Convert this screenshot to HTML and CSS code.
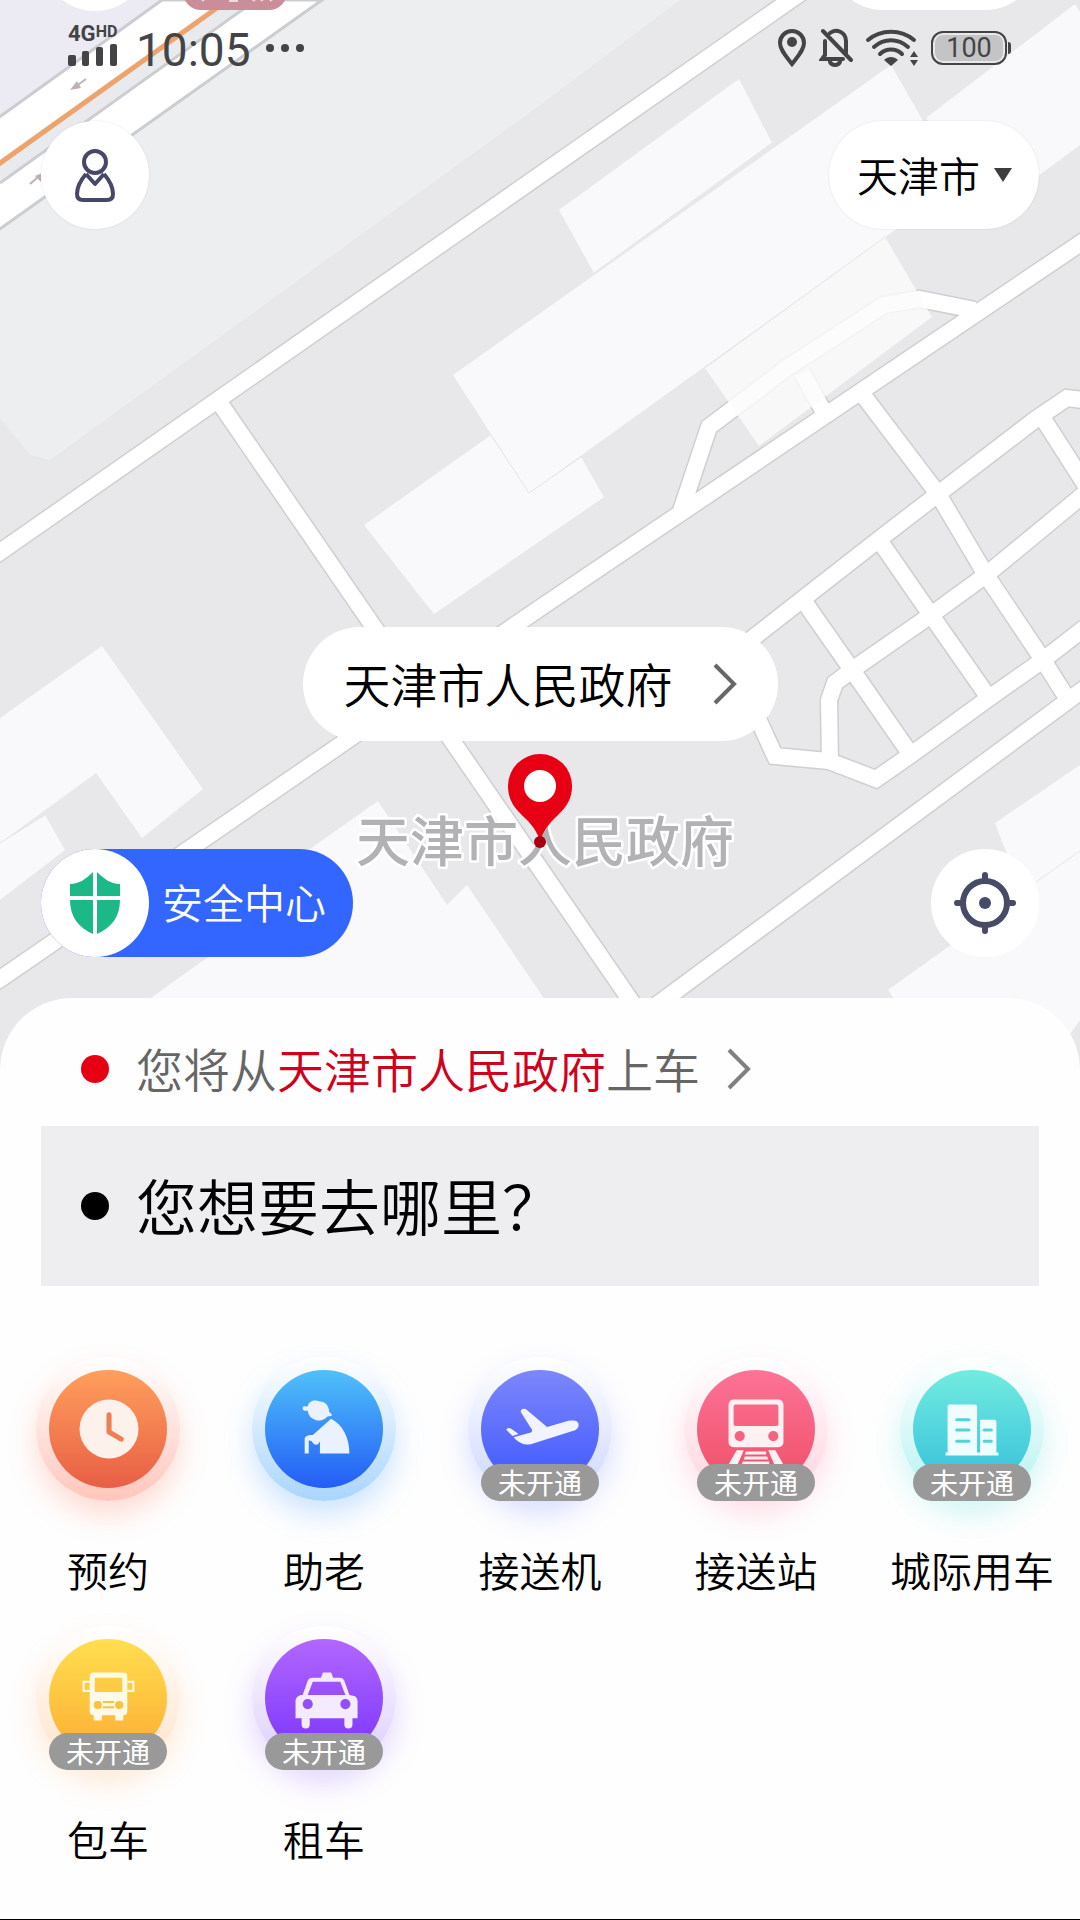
FILE: index.html
```html
<!DOCTYPE html>
<html lang="zh-CN">
<head>
<meta charset="utf-8">
<meta name="viewport" content="width=device-width, initial-scale=1">
<title>打车</title>
<link rel="stylesheet" href="styles.css">
</head>
<body>
<div class="app">
  <svg class="map" viewBox="0 0 1080 1100" preserveAspectRatio="xMidYMin slice" aria-hidden="true">
    <defs>
      <g id="roads" fill="none" stroke-linejoin="miter">
        <path d="M-20 566 812-15"/>
        <path d="M219 402 640 1014"/>
        <path d="M-20 992 0 979 349 739 540 608 1100 230"/>
        <path d="M680 514 709 427 788 367 884 305 919 299 975 310"/>
        <path d="M802 373 824 412"/>
        <path d="M735 652 877 541 938 494 1036 419 1067 398 1100 402"/>
        <path d="M830 761 829 700 835 683 852 670 931 615 986 575 1100 481"/>
        <path d="M752 706 775 756 829 761 876 779 912 754 989 698 1043 660 1100 616"/>
        <path d="M650 1010 1100 677"/>
        <path d="M860 391 938 494 986 575 1043 660 1067 698"/>
        <path d="M877 537 931 615 989 698"/>
        <path d="M803 600 852 670 909 752"/>
        <path d="M1042 417 1090 492"/>
      </g>
    </defs>
    <rect width="1080" height="1100" fill="#e8e8eb"/>
    <path d="M0 117 162 0H680L540 105 50 460 30 455 0 418Z" fill="#edeef0"/>
    <path d="M0 0H162L0 117Z" fill="#eceaf2"/>
    <path d="M-20 131 162 0H322L-20 243Z" fill="#fff" stroke="#cbcdd0" stroke-width="3"/>
    <path d="M0 166 230 0H256L0 183Z" fill="#e8eaed"/>
    <path d="M0 183 256 0" stroke="#cbcdd0" stroke-width="3"/>
    <path d="M-4 166 228 0" stroke="#eda36c" stroke-width="5"/>
    <g stroke="#bfb2b3" stroke-width="2" fill="#bfb2b3"><path d="M86 79 75 87"/><path d="M70 90 77 81 81 88Z" stroke="none"/><path d="M30 184 38 177"/><path d="M42 173 35 176 41 182Z" stroke="none"/></g>
    <use href="#roads" stroke="#cfcfd2" stroke-width="19"/>
    <use href="#roads" stroke="#fff" stroke-width="16"/>
    <g fill="#f9f9fc">
      <path d="M559 210 739 79 772 143 594 273Z"/>
      <path d="M453 375 891 65 960 185 885 237 529 493Z"/>
      <path d="M926 118 1075 4 1080 12V145L1030 182 960 185Z"/>
      <path d="M364 525 491 435 529 493 581 457 604 497 434 614Z"/>
      <path d="M0 718 102 646 203 789 142 838 96 773 0 843Z"/>
      <path d="M0 843 45 815 65 850 0 900Z"/>
      <path d="M378 801 447 905 467 885 545 1000H148L310 884 290 863Z"/>
      <path d="M1080 765 995 823 1022 894 888 990 905 1015 1066 1080V1040L1080 1020Z"/>
      <path d="M705 368 885 237 932 317 759 446Z" fill="#fbfbfd" fill-opacity=".8"/>
    </g>
    <path d="M594 273 772 143M705 368 885 237M529 493 581 457M491 435 529 493M0 843 45 815M926 118 960 185M1036 882 1080 851" fill="none" stroke="#e6e6ea"/>
    <circle cx="95" cy="-43" r="54" fill="#fff"/>
    <rect x="829" y="-98" width="210" height="108" rx="54" fill="#fff"/>
    <rect x="183" y="-40" width="104" height="50" rx="18" fill="#c98e99"/>
    <path d="M202 1 206-2M229 1h8V-3M250-2 255 1M261 1 266-3M270 1 274-2" fill="none" stroke="#efd9dd" stroke-width="2"/>
    <text class="map-label" x="356" y="862">天津市人民政府</text>
  </svg>

  <section class="stage">
    <div class="status">
      <div class="carrier">
        <span class="network">4G<span class="network-hd">HD</span></span>
        <svg width="50" height="22" viewBox="0 0 50 22" fill="#444446"><rect y="11" width="8" height="11" rx="2"/><rect x="14" y="7" width="7" height="15" rx="2"/><rect x="28" y="3" width="7" height="19" rx="2"/><rect x="42" width="7" height="22" rx="2"/></svg>
      </div>
      <time class="clock">10:05</time>
      <svg class="more" width="40" height="8" viewBox="0 0 40 8" fill="#444446"><circle cx="5" cy="4" r="4"/><circle cx="20" cy="4" r="4"/><circle cx="35" cy="4" r="4"/></svg>
      <div class="indicators">
        <svg width="30" height="40" viewBox="0 0 30 40"><path d="M15 36C9 28 3 22 3 15a12 12 0 0 1 24 0c0 7-6 13-12 21Z" fill="none" stroke="#444446" stroke-width="4"/><circle cx="15" cy="14" r="5" fill="#444446"/></svg>
        <svg width="34" height="40" viewBox="0 0 34 40" fill="none" stroke="#444446" stroke-width="4" stroke-linecap="round"><path d="M6 13v14L3 31H24M11 5C17 0 27 4 27 13v12"/><path d="M11 34c2 4 8 4 10 0"/><path d="M4 3 32 32"/></svg>
        <svg width="54" height="40" viewBox="0 0 54 40" fill="none" stroke="#444446" stroke-width="4" stroke-linecap="round"><path d="M3 12C16 1 36 1 49 12M9 19c10-9 24-9 34 0M15 26c6-6 16-6 22 0"/><path d="M19 32c4-4 10-4 14 0l-7 6Z" fill="#444446" stroke="none"/><path d="M49 23l4 6h-8ZM49 38l4-6h-8Z" fill="#444446" stroke="none"/></svg>
        <span class="battery">100</span>
      </div>
    </div>

    <header class="topbar">
      <button class="round" type="button" aria-label="个人中心">
        <svg width="46" height="56" viewBox="0 0 46 56" fill="none" stroke="#47476a" stroke-width="4" stroke-linejoin="round"><circle cx="23" cy="15" r="11"/><path d="M14 27C8 34 5 42 5 47c0 4 2 6 6 6h24c4 0 6-2 6-6 0-5-3-13-9-20M14 27l9 10 9-10"/></svg>
      </button>
      <label class="city">
        <select class="city-select" aria-label="城市"><option>天津市</option></select>
        <svg class="city-arrow" width="18" height="14" viewBox="0 0 18 14"><path d="M0 0H18L9 14Z" fill="#3d3d3f"/></svg>
      </label>
    </header>

    <div class="pickup">
      <button class="callout" type="button">
        <span class="lift">天津市人民政府</span>
        <svg width="24" height="42" viewBox="0 0 24 42" fill="none" stroke="#666" stroke-width="4"><path d="M2 2 21 21 2 40"/></svg>
      </button>
      <svg class="pin" width="66" height="95" viewBox="0 0 66 95"><path d="M33 0a32 32 0 0 0-32 32c0 17 10 25 18 33 7 7 11 13 14 22 3-9 7-15 14-22 8-8 18-16 18-33A32 32 0 0 0 33 0Z" fill="#e70014"/><circle cx="33" cy="32" r="16" fill="#fff"/><circle cx="33" cy="88" r="6" fill="#a80010"/></svg>
    </div>

    <div class="tools">
      <button class="safety" type="button">
        <span class="round">
          <svg width="52" height="64" viewBox="0 0 52 64" fill="#1cb887"><path d="M24 1V25H1V13C10 13 17 8 24 1ZM28 1V25H51V13C42 13 35 8 28 1ZM24 29V63C10 57 1 46 1 29ZM28 29V63C42 57 51 46 51 29Z"/></svg>
        </span>
        <span class="safety-text lift">安全中心</span>
      </button>
      <button class="round" type="button" aria-label="定位">
        <svg width="62" height="62" viewBox="0 0 62 62" fill="none" stroke="#474b66" stroke-width="6" stroke-linecap="round"><circle cx="31" cy="31" r="22"/><path d="M31 3V9M31 53v6M3 31H9M53 31h6"/><circle cx="31" cy="31" r="6" fill="#474b66" stroke="none"/></svg>
      </button>
    </div>
  </section>

  <main class="sheet">
    <button class="from" type="button">
      <span class="dot dot-red"></span>
      <span class="lift">您将从<span class="from-place">天津市人民政府</span>上车</span>
      <svg width="24" height="42" viewBox="0 0 24 42" fill="none" stroke="#808080" stroke-width="4"><path d="M2 2 21 21 2 40"/></svg>
    </button>
    <button class="to" type="button"><span class="dot"></span><span class="lift">您想要去哪里？</span></button>

    <nav class="services">
      <a class="service" href="#booking">
        <span class="ring ring-orange"><svg class="disc" viewBox="0 0 116 116"><circle cx="59" cy="58" r="29" fill="#fdf1ec"/><path d="M59 44V61L71 68" fill="none" stroke="#ee7f52" stroke-width="5" stroke-linecap="round" stroke-linejoin="round"/></svg></span>
        <span>预约</span>
      </a>
      <a class="service" href="#elder">
        <span class="ring ring-blue"><svg class="disc" viewBox="0 0 116 116" fill="#eaf2ff"><path d="M37 37C38 35 40 36 42 36 43 30 49 29 54 31 60 31 63 36 63 41L66 44C65 46 63 45 61 46A11 11 0 0 1 42 40C39 40 37 40 37 37Z"/><path d="M65 48C77 54 83 68 83 82H54V70C52 75 48 74 46 70L43 69V82H39V68C39 65 42 64 47 64Z"/></svg></span>
        <span>助老</span>
      </a>
      <a class="service" href="#airport">
        <span class="ring ring-indigo"><svg class="disc" viewBox="0 0 116 116" fill="#f1f3ff"><path d="M39 41C39 38 43 37 46 40L65 56 86 50C92 49 96 50 96 54 96 57 94 59 90 60L52 72C46 75 38 73 32 66L47 62C51 61 51 59 49 57Z"/><path d="M25 59C25 57 28 56 30 58L37 63 31 65Z"/></svg><span class="badge">未开通</span></span>
        <span>接送机</span>
      </a>
      <a class="service" href="#station">
        <span class="ring ring-pink"><svg class="disc" viewBox="0 0 116 116"><path d="M36 29H80a5 5 0 0 1 5 5V71a5 5 0 0 1-5 5H36a5 5 0 0 1-5-5V34a5 5 0 0 1 5-5ZM38 34a2 2 0 0 0-2 2V53a2 2 0 0 0 2 2H78a2 2 0 0 0 2-2V36a2 2 0 0 0-2-2Z" fill="#fff0f2" fill-rule="evenodd"/><circle cx="42" cy="65" r="5" fill="#f2647f"/><circle cx="75" cy="65" r="5" fill="#f2647f"/><path d="M39 79H46L40 93H31ZM70 79H77L85 93H76ZM48 80H68V83H47ZM47 85H69L70 88H46ZM45 90H71V93H44Z" fill="#fff0f2"/></svg><span class="badge">未开通</span></span>
        <span>接送站</span>
      </a>
      <a class="service" href="#intercity">
        <span class="ring ring-teal"><svg class="disc" viewBox="0 0 116 116"><path d="M36 34H61a2 2 0 0 1 2 2V81H66V49H80a2 2 0 0 1 2 2V81H84V84H32V81H34V36a2 2 0 0 1 2-2Z" fill="#f0fdff"/><path d="M43 49H55M43 59H55M43 70H55M70 59H77M70 70H77" stroke="#50d3da" stroke-width="3" stroke-linecap="round"/></svg><span class="badge">未开通</span></span>
        <span>城际用车</span>
      </a>
      <a class="service" href="#charter">
        <span class="ring ring-yellow"><svg class="disc" viewBox="0 0 116 116"><path d="M44 33H73a4 4 0 0 1 4 4V71a4 4 0 0 1-4 4V80H65V75H52V80H44V75a4 4 0 0 1-4-4V37a4 4 0 0 1 4-4ZM45 38V52H72V38Z" fill="#fff9e8" fill-rule="evenodd"/><path d="M40 42H34V51H40M77 42H83V51H77" fill="none" stroke="#fff9e8" stroke-width="2"/><g fill="#fdc040"><circle cx="48" cy="65" r="4"/><circle cx="69" cy="65" r="4"/><path d="M53 61H64V63H53ZM53 66H64V68H53Z"/></g></svg><span class="badge">未开通</span></span>
        <span>包车</span>
      </a>
      <a class="service" href="#rental">
        <span class="ring ring-purple"><svg class="disc" viewBox="0 0 116 116"><path d="M55 38 57 33H65L67 38H73C76 38 77 39 78 41L83 55 88 56C90 57 91 59 91 61V78H86V84A4 4 0 0 1 78 84V78H44V84A4 4 0 0 1 36 84V78H30V61C30 58 32 56 35 55H37L42 41C43 39 44 38 47 38ZM47 42 42 55H79L74 42Z" fill="#f5ebff" fill-rule="evenodd"/><circle cx="42" cy="64" r="5" fill="#9050fb"/><circle cx="79" cy="64" r="5" fill="#9050fb"/></svg><span class="badge">未开通</span></span>
        <span>租车</span>
      </a>
    </nav>
  </main>
</div>
</body>
</html>
```
FILE: styles.css
```css
* {
  box-sizing: border-box;
}

body {
  margin: 0;
  background: #fff;
  color: #000;
  font-family: "Noto Sans CJK SC", "Noto Sans", sans-serif;
  font-weight: 350;
}

button,
select {
  margin: 0;
  padding: 0;
  border: 0;
  background: none;
  color: inherit;
  font: inherit;
}

svg {
  display: block;
  flex: none;
}

.app {
  position: relative;
  display: flex;
  flex-direction: column;
  min-height: 100vh;
  overflow: hidden;
  border-bottom: 1px solid #000;
}

.map {
  position: absolute;
  top: 0;
  left: 0;
  width: 100%;
  height: 1100px;
}

.map-label {
  font-size: 54px;
  font-weight: 500;
  fill: #b2b2b5;
  stroke: #fff;
  stroke-width: 5px;
  stroke-linejoin: round;
  paint-order: stroke;
}

.stage {
  position: relative;
  display: flex;
  flex-direction: column;
  min-height: 52vh;
  padding: 0 41px 41px;
}

/* Optical centring of CJK text beside icons */
.lift {
  padding-bottom: 4px;
}

/* Status bar */

.status {
  display: flex;
  align-items: center;
  height: 96px;
  padding: 0 32px 0 27px;
  color: #444446;
  font-family: Roboto, sans-serif;
  font-weight: 400;
}

.carrier {
  display: flex;
  flex-direction: column;
  gap: 1px;
  width: 50px;
  padding-bottom: 6px;
}

.network {
  display: flex;
  font-size: 22px;
  font-weight: 700;
  line-height: 18px;
}

.network-hd {
  font-size: 16px;
  line-height: 14px;
}

.clock {
  margin-left: 18px;
  padding-top: 4px;
  font-size: 46px;
  line-height: 60px;
}

.more {
  margin-left: 14px;
}

.indicators {
  display: flex;
  align-items: center;
  gap: 12px;
  margin-left: auto;
}

.battery {
  position: relative;
  width: 76px;
  height: 34px;
  border: 2px solid #444446;
  border-radius: 12px;
  background: #c4c4c6;
  box-shadow: inset 0 0 0 2px #e8e8eb;
  font-size: 27px;
  line-height: 31px;
  text-align: center;
}

.battery::after {
  content: "";
  position: absolute;
  top: 9px;
  right: -6px;
  width: 3px;
  height: 12px;
  border-radius: 0 3px 3px 0;
  background: #444446;
}

/* Controls over the map */

.topbar,
.tools {
  display: flex;
  align-items: center;
  justify-content: space-between;
}

.topbar {
  margin-top: 25px;
}

.round {
  display: flex;
  align-items: center;
  justify-content: center;
  width: 108px;
  height: 108px;
  border-radius: 50%;
  background: #fff;
}

.topbar .round,
.city {
  box-shadow: 0 0 2px rgba(0, 0, 0, 0.12);
}

.city {
  position: relative;
  display: flex;
  border-radius: 54px;
  background: #fff;
}

.city-select {
  width: 210px;
  height: 108px;
  padding: 0 58px 2px 28px;
  border-radius: 54px;
  appearance: none;
  font-size: 41px;
}

.city-arrow {
  position: absolute;
  top: 47px;
  right: 27px;
  pointer-events: none;
}

.pickup {
  display: flex;
  flex-direction: column;
  align-items: center;
  gap: 13px;
  margin-top: auto;
}

.callout {
  display: flex;
  align-items: center;
  gap: 40px;
  height: 114px;
  padding: 0 41px;
  border-radius: 57px;
  background: #fff;
  font-size: 47px;
}

.safety {
  display: flex;
  align-items: center;
  border-radius: 54px;
  background: #3366ff;
  color: #fff;
}

.safety-text {
  padding-right: 27px;
  padding-left: 13px;
  font-size: 41px;
}

/* Trip sheet */

.sheet {
  position: relative;
  flex: 1;
  border-radius: 72px 72px 0 0;
  background: #fefefe;
}

.from {
  display: flex;
  align-items: center;
  gap: 27px;
  height: 128px;
  padding: 14px 81px 0;
  color: #666;
  font-size: 47px;
}

.from-place {
  color: #d0021b;
}

.dot {
  flex: none;
  width: 28px;
  height: 28px;
  border-radius: 50%;
  background: #000;
}

.dot-red {
  background: #e70014;
}

.to {
  display: flex;
  align-items: center;
  gap: 27px;
  width: calc(100% - 82px);
  height: 160px;
  margin: 0 41px;
  padding: 0 40px;
  background: #eeedf0;
  font-size: 61px;
}

/* Service grid */

.services {
  display: grid;
  grid-template-columns: repeat(5, 1fr);
  row-gap: 33px;
  padding: 71px 0 40px;
}

.service {
  display: flex;
  flex-direction: column;
  align-items: center;
  gap: 44px;
  color: #000;
  font-size: 41px;
  line-height: 48px;
  text-decoration: none;
  white-space: nowrap;
}

.ring {
  position: relative;
  display: grid;
  place-items: center;
  width: 144px;
  height: 144px;
  border-radius: 50%;
  background: linear-gradient(#fff, var(--ring));
  box-shadow: 0 14px 28px var(--glow);
}

.disc {
  width: 118px;
  height: 118px;
  border-radius: 50%;
  background: linear-gradient(var(--disc-top), var(--disc-bottom));
}

.badge {
  position: absolute;
  bottom: 0;
  left: 13px;
  width: 118px;
  height: 37px;
  border-radius: 19px;
  background: #999;
  color: #fff;
  font-size: 28px;
  font-weight: 400;
  line-height: 36px;
  text-align: center;
}

.ring-orange {
  --disc-top: #ff9f5c;
  --disc-bottom: #e85f45;
  --ring: #ffc6bb;
  --glow: rgba(255, 130, 100, 0.28);
}

.ring-blue {
  --disc-top: #4fc1fa;
  --disc-bottom: #235df5;
  --ring: #a9d5fc;
  --glow: rgba(80, 160, 255, 0.28);
}

.ring-indigo {
  --disc-top: #7d87fa;
  --disc-bottom: #3f58ff;
  --ring: #ccd6ff;
  --glow: rgba(110, 130, 255, 0.25);
}

.ring-pink {
  --disc-top: #fd7398;
  --disc-bottom: #ee4f66;
  --ring: #fed2de;
  --glow: rgba(255, 110, 150, 0.22);
}

.ring-teal {
  --disc-top: #72ece0;
  --disc-bottom: #35bfdb;
  --ring: #b6f2f1;
  --glow: rgba(80, 220, 220, 0.25);
}

.ring-yellow {
  --disc-top: #ffdf4f;
  --disc-bottom: #fdac33;
  --ring: #ffe2c8;
  --glow: rgba(255, 170, 90, 0.24);
}

.ring-purple {
  --disc-top: #b267ff;
  --disc-bottom: #7a35fb;
  --ring: #dccbff;
  --glow: rgba(150, 100, 255, 0.25);
}
```
